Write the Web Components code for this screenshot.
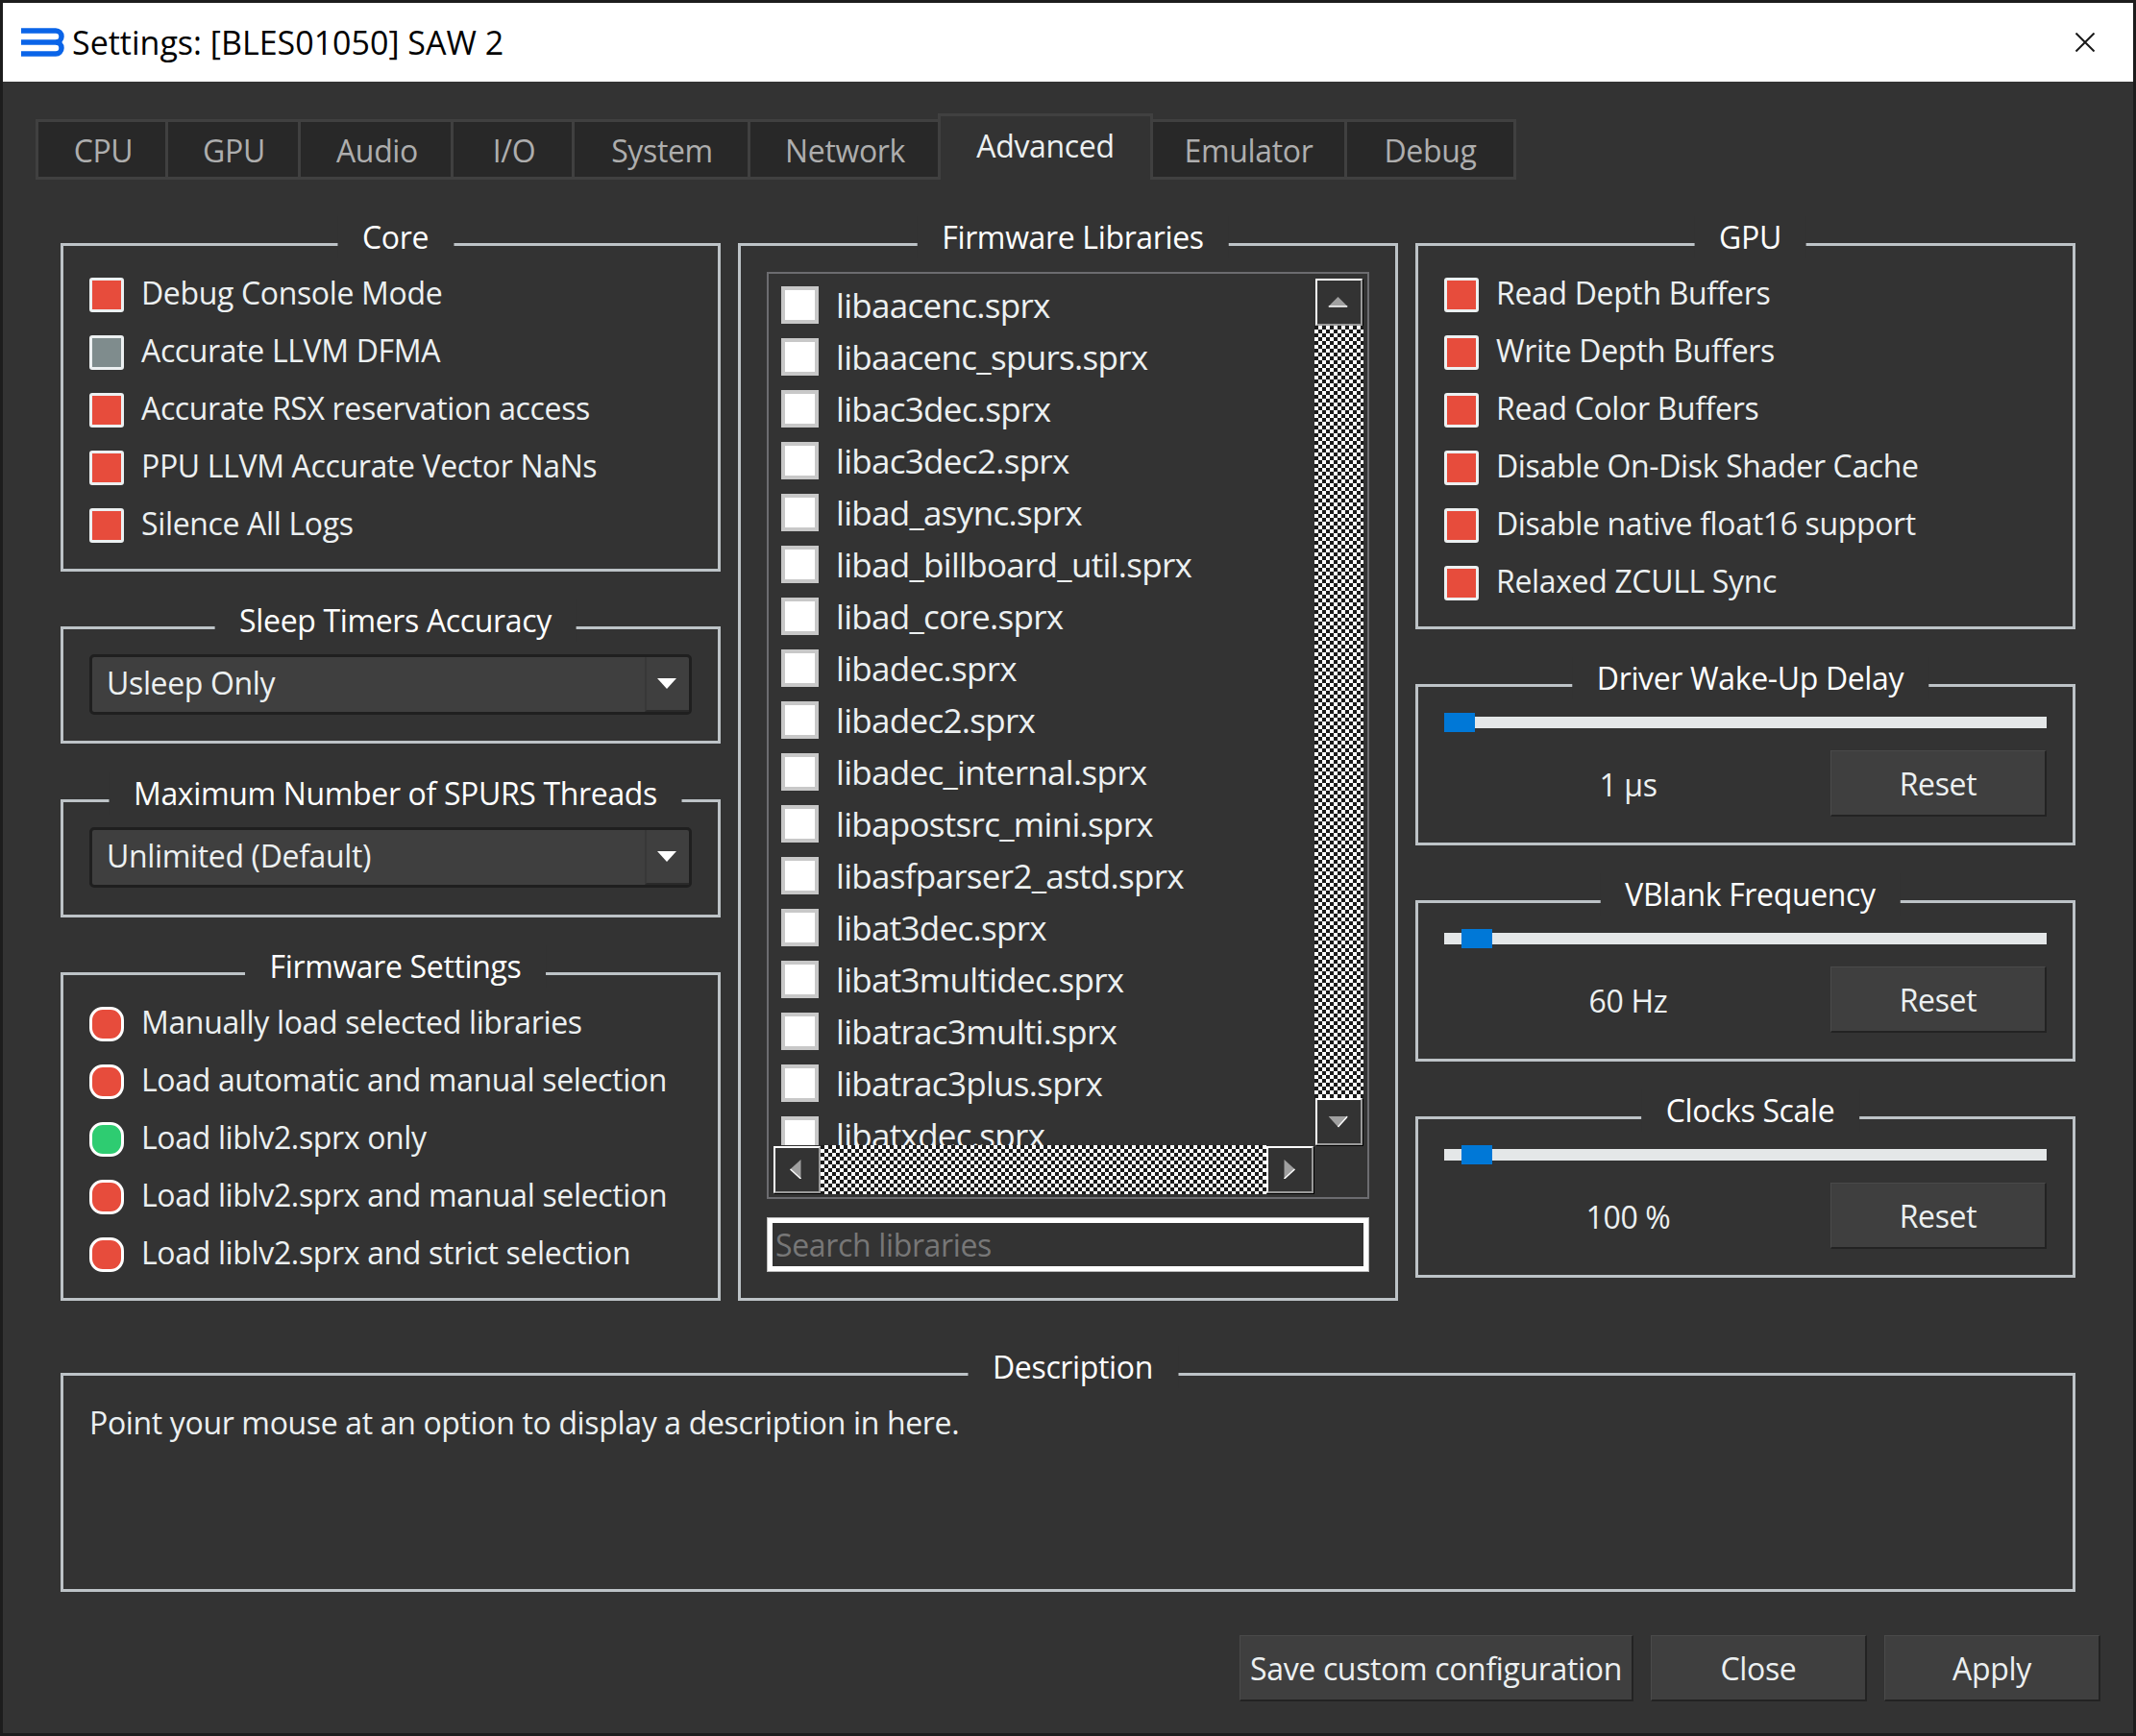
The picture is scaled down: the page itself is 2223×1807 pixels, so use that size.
<!DOCTYPE html>
<html>
<head>
<meta charset="utf-8">
<title>Settings</title>
<style>
    html, body { margin: 0; background: #1d1d1d; }
    body {
        width: 2223px;
        height: 1807px;
        overflow: hidden;
        font-family: "Open Sans", "Liberation Sans", sans-serif;
        font-size: 32px;
        letter-spacing: -0.35px;
        color: #ecf0f1;
    }
    .columns { display: flex; gap: 18px; align-items: flex-start; margin-top: 66px; }
    .col { display: flex; flex-direction: column; width: 687px; }
    .left { height: 1101px; justify-content: space-between; }
    .right { gap: 57px; }
    .description { margin-top: 75px; height: 228px; }
    .actions { display: flex; justify-content: flex-end; gap: 18px; margin: 45px -26px 0 0; }
</style>
</head>
<body>
<settings-window caption="Settings: [BLES01050] SAW 2">
    <tab-bar>
        <tab-item style="width:135px;padding-left:3px">CPU</tab-item>
        <tab-item style="width:138px;padding-left:2px">GPU</tab-item>
        <tab-item style="width:159px;padding-left:3px">Audio</tab-item>
        <tab-item style="width:126px;padding-left:3px">I/O</tab-item>
        <tab-item style="width:183px;padding-left:2px">System</tab-item>
        <tab-item style="width:198px;padding-left:2px">Network</tab-item>
        <tab-item style="width:224px" selected>Advanced</tab-item>
        <tab-item style="width:199px;border-left-width:0">Emulator</tab-item>
        <tab-item style="width:179px">Debug</tab-item>
    </tab-bar>

    <div class="columns">
        <div class="col left">
            <group-box legend="Core" pad="21px 27px 15px">
                <option-row state="off">Debug Console Mode</option-row>
                <option-row state="mixed">Accurate LLVM DFMA</option-row>
                <option-row state="off">Accurate RSX reservation access</option-row>
                <option-row state="off">PPU LLVM Accurate Vector NaNs</option-row>
                <option-row state="off">Silence All Logs</option-row>
            </group-box>
            <group-box legend="Sleep Timers Accuracy" pad="26px 27px 27px">
                <combo-box>Usleep Only</combo-box>
            </group-box>
            <group-box legend="Maximum Number of SPURS Threads" pad="26px 27px 28px">
                <combo-box>Unlimited (Default)</combo-box>
            </group-box>
            <group-box legend="Firmware Settings" pad="21px 27px 15px">
                <option-row state="off" round>Manually load selected libraries</option-row>
                <option-row state="off" round>Load automatic and manual selection</option-row>
                <option-row state="on" round>Load liblv2.sprx only</option-row>
                <option-row state="off" round>Load liblv2.sprx and manual selection</option-row>
                <option-row state="off" round>Load liblv2.sprx and strict selection</option-row>
            </group-box>
        </div>

        <div class="col">
            <group-box legend="Firmware Libraries" pad="27px 27px 27px">
                <library-list>
                    <library-item>libaacenc.sprx</library-item>
                    <library-item>libaacenc_spurs.sprx</library-item>
                    <library-item>libac3dec.sprx</library-item>
                    <library-item>libac3dec2.sprx</library-item>
                    <library-item>libad_async.sprx</library-item>
                    <library-item>libad_billboard_util.sprx</library-item>
                    <library-item>libad_core.sprx</library-item>
                    <library-item>libadec.sprx</library-item>
                    <library-item>libadec2.sprx</library-item>
                    <library-item>libadec_internal.sprx</library-item>
                    <library-item>libapostsrc_mini.sprx</library-item>
                    <library-item>libasfparser2_astd.sprx</library-item>
                    <library-item>libat3dec.sprx</library-item>
                    <library-item>libat3multidec.sprx</library-item>
                    <library-item>libatrac3multi.sprx</library-item>
                    <library-item>libatrac3plus.sprx</library-item>
                    <library-item>libatxdec.sprx</library-item>
                </library-list>
            </group-box>
        </div>

        <div class="col right">
            <group-box legend="GPU" pad="21px 27px 15px">
                <option-row state="off">Read Depth Buffers</option-row>
                <option-row state="off">Write Depth Buffers</option-row>
                <option-row state="off">Read Color Buffers</option-row>
                <option-row state="off">Disable On-Disk Shader Cache</option-row>
                <option-row state="off">Disable native float16 support</option-row>
                <option-row state="off">Relaxed ZCULL Sync</option-row>
            </group-box>
            <group-box legend="Driver Wake-Up Delay" pad="27px 27px 27px">
                <slider-row pos="0" value="1 µs"></slider-row>
            </group-box>
            <group-box legend="VBlank Frequency" pad="27px 27px 27px">
                <slider-row pos="18" value="60 Hz"></slider-row>
            </group-box>
            <group-box legend="Clocks Scale" pad="27px 27px 27px">
                <slider-row pos="18" value="100 %"></slider-row>
            </group-box>
        </div>
    </div>

    <group-box class="description" legend="Description" pad="27px 27px">
        Point your mouse at an option to display a description in here.
    </group-box>

    <div class="actions">
        <push-button style="width:410px">Save custom configuration</push-button>
        <push-button style="width:225px">Close</push-button>
        <push-button style="width:225px">Apply</push-button>
    </div>
</settings-window>

<script>
class SettingsWindow extends HTMLElement {
    constructor() {
        super();
        this.attachShadow({ mode: "open" });
        this.shadowRoot.innerHTML = `
            <style>
                :host { display: block; box-sizing: border-box; width: 2217px; height: 1801px; margin: 3px; background: #333333; overflow: hidden; }
                .titlebar { display: flex; align-items: center; gap: 7px; height: 82px; padding-left: 19px; background: #ffffff; color: #000000; }
                .caption { flex: 1; font-size: 34px; letter-spacing: 0; }
                .close { margin-right: 40px; }
                svg { display: block; }
                .body { padding: 33px 60px 0; }
            </style>
            <div class="titlebar">
                <svg width="46" height="30" viewBox="0 0 46 30" fill="none" stroke="#0a64e8" stroke-width="5.5">
                    <path d="M0 3H36a6 6 0 0 1 0 12H0"/>
                    <path d="M36 15a6 6 0 0 1 0 12H0"/>
                </svg>
                <span class="caption"></span>
                <svg class="close" width="20" height="20" viewBox="0 0 20 20" stroke="#1a1a1a" stroke-width="2">
                    <path d="M0.5 0.5L19.5 19.5M19.5 0.5L0.5 19.5"/>
                </svg>
            </div>
            <div class="body"><slot></slot></div>
        `;
        this.shadowRoot.querySelector(".caption").textContent = this.getAttribute("caption");
    }
}

class TabBar extends HTMLElement {
    constructor() {
        super();
        this.attachShadow({ mode: "open" });
        this.shadowRoot.innerHTML = `
            <style>
                :host { display: flex; align-items: flex-end; height: 69px; margin-left: -26px; }
            </style>
            <slot></slot>
        `;
    }
}

class TabItem extends HTMLElement {
    constructor() {
        super();
        this.attachShadow({ mode: "open" });
        this.shadowRoot.innerHTML = `
            <style>
                :host {
                    display: flex; align-items: center; justify-content: center; box-sizing: border-box;
                    height: 63px; padding-top: 2px; background: #282828; color: #aeaeae;
                    border: 3px solid #404040; border-right-width: 0;
                }
                :host(:last-child) { border-right-width: 3px; }
                :host([selected]) {
                    height: 69px; padding-top: 0; padding-bottom: 6px; background: #333333; color: #ecf0f1;
                    border-bottom-width: 0; border-right-width: 3px;
                }
            </style>
            <slot></slot>
        `;
    }
}

class GroupBox extends HTMLElement {
    constructor() {
        super();
        this.attachShadow({ mode: "open" });
        this.shadowRoot.innerHTML = `
            <style>
                :host { display: block; position: relative; box-sizing: border-box; border: 3px solid #bdc3c7; }
                .legend {
                    position: absolute; top: -31px; left: 50%; transform: translateX(calc(-50% + 5px));
                    padding: 0 26px; line-height: 44px; background: #333333; color: #ffffff; white-space: nowrap;
                }
                .content { padding: 21px 27px 14px; }
            </style>
            <div class="legend"></div>
            <div class="content"><slot></slot></div>
        `;
        this.shadowRoot.querySelector(".legend").textContent = this.getAttribute("legend");
        if (this.hasAttribute("pad")) {
            this.shadowRoot.querySelector(".content").style.padding = this.getAttribute("pad");
        }
    }
}

class OptionRow extends HTMLElement {
    constructor() {
        super();
        this.attachShadow({ mode: "open" });
        this.shadowRoot.innerHTML = `
            <style>
                :host { display: flex; align-items: center; gap: 18px; height: 60px; white-space: nowrap; }
                .box { box-sizing: border-box; width: 36px; height: 36px; border: 3px solid #ecf0f1; border-radius: 3px; background: #e74c3c; flex: none; }
                :host([state="mixed"]) .box { background: #7f8c8d; }
                :host([state="on"]) .box { background: #2ecc71; }
                :host([round]) .box { border-radius: 14px; border-color: #ffffff; }
                .text { padding-bottom: 5px; }
            </style>
            <div class="box"></div>
            <span class="text"><slot></slot></span>
        `;
    }
}

class ComboBox extends HTMLElement {
    constructor() {
        super();
        this.attachShadow({ mode: "open" });
        this.shadowRoot.innerHTML = `
            <style>
                :host {
                    display: flex; align-items: stretch; box-sizing: border-box; height: 63px;
                    background: #3f3f3f; border: 3px solid #1f1f1f; border-radius: 5px;
                }
                .text { flex: 1; padding-left: 15px; line-height: 53px; }
                .drop { display: flex; align-items: center; justify-content: center; width: 46px; padding-right: 2px; box-sizing: border-box; border-left: 2px solid #383838; border-bottom: 2px solid #2a2a2a; }
            </style>
            <div class="text"><slot></slot></div>
            <div class="drop">
                <svg width="20" height="11" viewBox="0 0 20 11"><path d="M0 0H20L10 11Z" fill="#ffffff"/></svg>
            </div>
        `;
    }
}

class SliderRow extends HTMLElement {
    constructor() {
        super();
        this.attachShadow({ mode: "open" });
        this.shadowRoot.innerHTML = `
            <style>
                :host { display: block; }
                .track { height: 20px; background: linear-gradient(#e4e7e8, #e4e7e8) center / 100% 12px no-repeat; }
                .handle { width: 32px; height: 20px; background: #0078d7; }
                .row { display: flex; align-items: center; gap: 19px; margin-top: 19px; }
                .value { flex: 1; text-align: center; padding-top: 2px; }
                push-button { width: 225px; }
            </style>
            <div class="track"><div class="handle"></div></div>
            <div class="row">
                <div class="value"></div>
                <push-button>Reset</push-button>
            </div>
        `;
        this.shadowRoot.querySelector(".handle").style.marginLeft = this.getAttribute("pos") + "px";
        this.shadowRoot.querySelector(".value").textContent = this.getAttribute("value");
    }
}

class PushButton extends HTMLElement {
    constructor() {
        super();
        this.attachShadow({ mode: "open" });
        this.shadowRoot.innerHTML = `
            <style>
                :host {
                    display: flex; align-items: center; justify-content: center; box-sizing: border-box; height: 69px;
                    background: #3f3f3f; white-space: nowrap;
                    border-style: solid; border-width: 1px 2px 2px 1px; border-color: #4a4a4a #232323 #232323 #4a4a4a;
                }
            </style>
            <slot></slot>
        `;
    }
}

class LibraryList extends HTMLElement {
    constructor() {
        super();
        this.attachShadow({ mode: "open" });
        const arrow = (points, edge) => `
            <svg width="20" height="20" viewBox="0 0 20 20">
                <polygon points="${points}" fill="#a0a0a0"/>
                <polyline points="${edge}" fill="none" stroke="#ffffff" stroke-width="1.5"/>
            </svg>`;
        this.shadowRoot.innerHTML = `
            <style>
                :host { display: block; }
                .frame {
                    display: grid; grid-template-columns: 563px 51px; grid-template-rows: 902px 51px;
                    box-sizing: border-box; height: 965px; padding: 5px 3px 3px 5px; border: 2px solid #6c6c70;
                }
                .view { overflow: hidden; padding-left: 8px; }
                .bar { display: flex; background: none; }
                .vertical { flex-direction: column; }
                .track {
                    flex: 1;
                    background: repeating-conic-gradient(#ffffff 0 25%, #1a1a1a 0 50%) 0 0 / 8px 8px;
                }
                .btn {
                    display: flex; align-items: center; justify-content: center; flex: none; box-sizing: border-box;
                    width: 49px; height: 49px; background: #333333;
                    border-style: solid; border-width: 2px; border-color: #ffffff #9a9a9a #9a9a9a #ffffff;
                    box-shadow: 1px 1px 0 #000000;
                }
                .btn svg { transform: translate(-1.5px, -1px); }
                .vertical .btn { margin: 0 1px; }
                .horizontal { width: 562px; align-items: center; }
                .horizontal .track { align-self: stretch; }
                .search {
                    box-sizing: border-box; height: 57px; margin-top: 19px; padding-left: 3px; line-height: 45px;
                    border: 6px solid #ffffff; outline: 1px solid #bbbbbb; outline-offset: -1px; color: #777777;
                }
            </style>
            <div class="frame">
                <div class="view"><slot></slot></div>
                <div class="bar vertical">
                    <div class="btn">${arrow("10,5 20,15 0,15", "0,15 20,15")}</div>
                    <div class="track"></div>
                    <div class="btn">${arrow("0,5 20,5 10,16", "20,5 10,16")}</div>
                </div>
                <div class="bar horizontal">
                    <div class="btn">${arrow("15,0 15,20 4,10", "4,10 15,20")}</div>
                    <div class="track"></div>
                    <div class="btn">${arrow("5,0 16,10 5,20", "16,10 5,20")}</div>
                </div>
            </div>
            <div class="search">Search libraries</div>
        `;
    }
}

class LibraryItem extends HTMLElement {
    constructor() {
        super();
        this.attachShadow({ mode: "open" });
        this.shadowRoot.innerHTML = `
            <style>
                :host { display: flex; align-items: center; gap: 18px; height: 54px; font-size: 35px; letter-spacing: -0.7px; white-space: nowrap; }
                .box { box-sizing: border-box; flex: none; width: 39px; height: 39px; background: #ffffff; border: 4px solid #c8c8c8; }
            </style>
            <div class="box"></div>
            <span><slot></slot></span>
        `;
    }
}

customElements.define("settings-window", SettingsWindow);
customElements.define("tab-bar", TabBar);
customElements.define("tab-item", TabItem);
customElements.define("group-box", GroupBox);
customElements.define("option-row", OptionRow);
customElements.define("combo-box", ComboBox);
customElements.define("push-button", PushButton);
customElements.define("slider-row", SliderRow);
customElements.define("library-list", LibraryList);
customElements.define("library-item", LibraryItem);
</script>
</body>
</html>
